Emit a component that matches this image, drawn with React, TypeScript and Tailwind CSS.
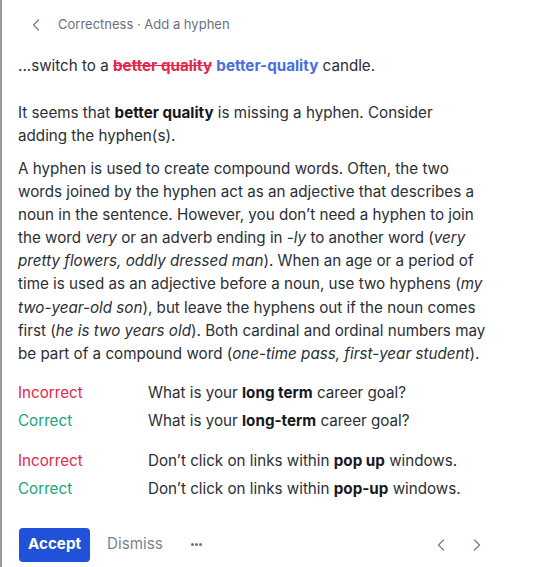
import React from "react";

function ChevronLeft({ className }: { className?: string }) {
  return (
    <svg className={className} width="8" height="12" viewBox="0 0 8 12" fill="none">
      <path d="M6.5 1L1.5 6l5 5" stroke="currentColor" strokeWidth="1.4" strokeLinecap="round" strokeLinejoin="round" />
    </svg>
  );
}
function ChevronRight({ className }: { className?: string }) {
  return (
    <svg className={className} width="8" height="12" viewBox="0 0 8 12" fill="none">
      <path d="M1.5 1l5 5-5 5" stroke="currentColor" strokeWidth="1.4" strokeLinecap="round" strokeLinejoin="round" />
    </svg>
  );
}

export default function App() {
  const font = { fontFamily: "Inter, 'Noto Sans', sans-serif" };
  return (
    <div style={font} className="w-[537px] h-[567px] bg-white border-l-2 border-[#9a9a9a] text-[#2b2f36] overflow-hidden">
      <div className="pl-[16px] w-[484px]">
        <div className="flex items-center h-[48px] pt-[1px]">
          <ChevronLeft className="ml-[14px] text-[#7c8190]" />
          <span className="ml-[18px] text-[13px] text-[#6b7080]">Correctness · Add a hyphen</span>
        </div>
        <div className="text-[15.2px] leading-[23px] mt-[6px]">
          ...switch to a{" "}
          <span className="font-bold text-[#e5274a] line-through decoration-[#e5274a]">better quality</span>{" "}
          <span className="font-bold text-[#4a6ee0]">better-quality</span> candle.
        </div>
        <p className="text-[15.2px] leading-[23px] mt-[24px]">
          It seems that <b className="font-bold text-[#16181d]">better quality</b> is missing a hyphen. Consider adding the hyphen(s).
        </p>
        <p className="text-[15.2px] leading-[23.1px] mt-[10px]">
          A hyphen is used to create compound words. Often, the two words joined by the hyphen act as an adjective that describes a noun in the sentence. However, you don’t need a hyphen to join the word <i>very</i> or an adverb ending in <i>-ly</i> to another word (<i>very pretty flowers, oddly dressed man</i>). When an age or a period of time is used as an adjective before a noun, use two hyphens (<i>my two-year-old son</i>), but leave the hyphens out if the noun comes first (<i>he is two years old</i>). Both cardinal and ordinal numbers may be part of a compound word (<i>one-time pass, first-year student</i>).
        </p>
        <div className="mt-[16px] text-[15.2px] leading-[23px]">
          <div className="grid grid-cols-[130px_1fr] gap-y-[5px]">
            <span className="text-[#e5274a]">Incorrect</span>
            <span>What is your <b className="font-bold text-[#16181d]">long term</b> career goal?</span>
            <span className="text-[#1aa37e]">Correct</span>
            <span>What is your <b className="font-bold text-[#16181d]">long-term</b> career goal?</span>
          </div>
          <div className="grid grid-cols-[130px_1fr] gap-y-[5px] mt-[17px]">
            <span className="text-[#e5274a]">Incorrect</span>
            <span>Don’t click on links within <b className="font-bold text-[#16181d]">pop up</b> windows.</span>
            <span className="text-[#1aa37e]">Correct</span>
            <span>Don’t click on links within <b className="font-bold text-[#16181d]">pop-up</b> windows.</span>
          </div>
        </div>
        <div className="flex items-center mt-[28px]">
          <button className="ml-[1px] h-[34px] px-[9px] rounded-[4px] bg-[#2251d9] text-white text-[15.2px] font-bold">Accept</button>
          <span className="ml-[17px] text-[15.2px] text-[#7c8190]">Dismiss</span>
          <span className="ml-[28px] flex gap-[1px] items-center">
            <span className="w-[3px] h-[3px] rounded-full bg-[#6b7080]" />
            <span className="w-[3px] h-[3px] rounded-full bg-[#6b7080]" />
            <span className="w-[3px] h-[3px] rounded-full bg-[#6b7080]" />
          </span>
          <div className="ml-auto flex items-center gap-[28px] mr-[5px]">
            <ChevronLeft className="text-[#7c8190]" />
            <ChevronRight className="text-[#7c8190]" />
          </div>
        </div>
      </div>
    </div>
  );
}
